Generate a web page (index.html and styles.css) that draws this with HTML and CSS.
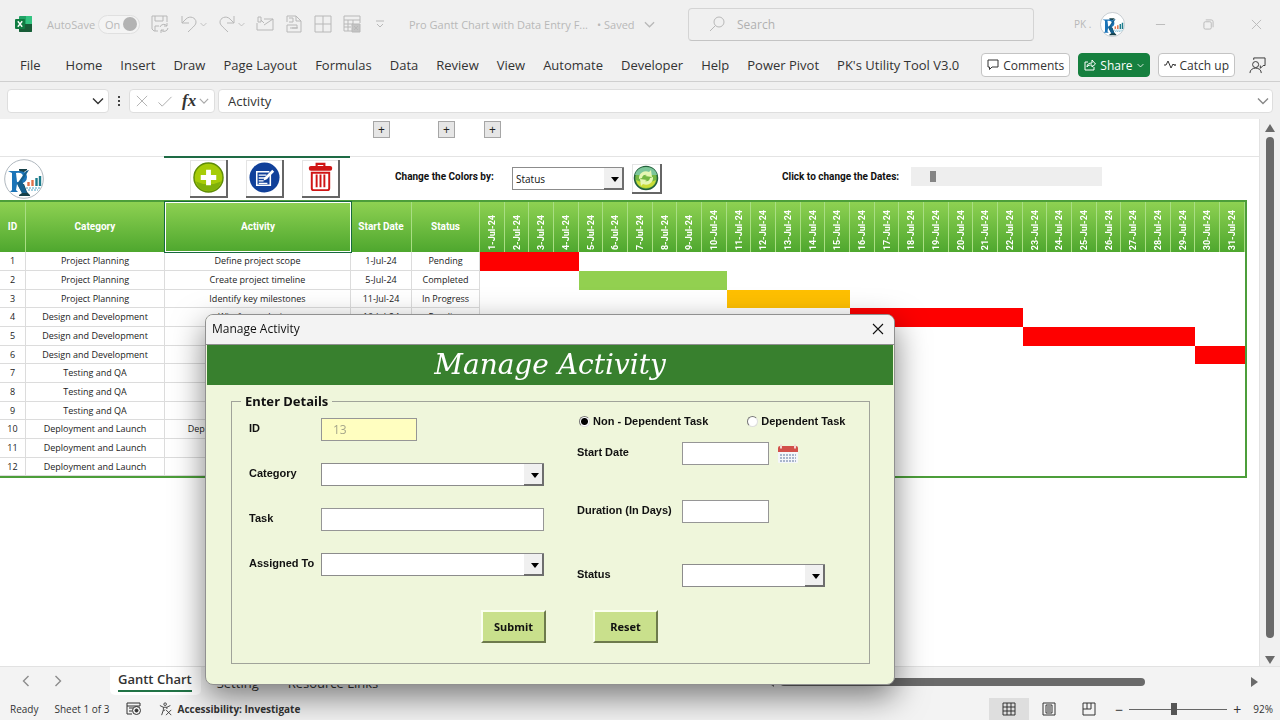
FILE: index.html
```html
<!DOCTYPE html>
<html lang="en">
<head>
  <meta charset="UTF-8">
  <meta name="viewport" content="width=device-width, initial-scale=1.0">
  <title>Pro Gantt Chart with Data Entry Form</title>
  <link rel="stylesheet" href="styles.css">
</head>
<body>
  <svg class="defs" width="0" height="0" aria-hidden="true">
    <symbol id="chevron" viewBox="0 0 12 12"><path d="M1 3.500 6 8.500l5-5" fill="none" stroke="currentColor" stroke-width="1.4"/></symbol>
    <symbol id="cross" viewBox="0 0 12 12"><path d="M1 1l10 10M11 1 1 11" fill="none" stroke="currentColor" stroke-width="1.1"/></symbol>
    <symbol id="logo" viewBox="0 0 40 40">
      <circle cx="20" cy="20" r="19.3" fill="#fff" stroke="#9aa5ad" stroke-width="0.8"/>
      <path d="M14 26 20 25l3 8 3 3v1H15v-1l3-2z" fill="#17414a"/>
      <path d="M15 11v-1h8v1l-3 2-3 3z" fill="#17414a"/>
      <path d="M4 12h11q8 0 8 6t-8 7h-2l-1 6 2 2H6l2-2V14z" fill="#1b74b8"/>
      <path d="M12 14q7-1 7 4t-6 5z" fill="#fff"/>
      <path d="M13 25 22 12l3-1-7 11 5 12h-5z" fill="#155f8e"/>
      <path d="M24.500 23v4" stroke="#e0714a" stroke-width="2.400"/>
      <path d="M28.500 21v6" stroke="#e0714a" stroke-width="2.400"/>
      <path d="M32.500 19v8M36 17v10" stroke="#1d7c8c" stroke-width="2.400"/>
      <path d="M22 29h14M24 31h10" stroke="#4aa3c4" stroke-width="1" stroke-dasharray="2 1"/>
    </symbol>
  </svg>

  <div class="app">
    <header class="titlebar">
      <svg class="excel-logo" viewBox="0 0 18 18">
        <rect x="4" y="1" width="13" height="16" rx="1" fill="#21a366"/>
        <path d="M4 9h13v7a1 1 0 0 1-1 1H5a1 1 0 0 1-1-1z" fill="#185c37"/>
        <path d="M11 1h5a1 1 0 0 1 1 1v7h-6z" fill="#33c481"/>
        <rect x="0" y="4" width="10" height="10" rx="1" fill="#107c41"/>
        <path d="M2.800 6.300l4.400 5.400M7.200 6.300l-4.400 5.400" stroke="#fff" stroke-width="1.400"/>
      </svg>
      <span class="autosave">AutoSave</span>
      <button class="toggle" type="button">On <i></i></button>
      <div class="quick">
        <svg viewBox="0 0 18 18"><path d="M7 16H3L1 14V1h15v6M4 1v5h8V1M4 16v-5h4"/><path d="M9 12a4 4 0 0 1 7-1M16 8v3h-3M17 13a4 4 0 0 1-7 2M10 18v-3h3"/></svg>
        <span class="pair">
          <svg viewBox="0 0 18 18"><path d="M2 1v7h7M2 8l4-4c4-4 10-1 10 3 0 3-2 4-8 10"/></svg>
          <svg class="mini"><use href="#chevron"/></svg>
        </span>
        <span class="pair">
          <svg viewBox="0 0 18 18"><path d="M16 1v7H9M16 8l-4-4C8 0 2 3 2 7c0 3 2 4 8 10"/></svg>
          <svg class="mini"><use href="#chevron"/></svg>
        </span>
        <svg viewBox="0 0 18 18"><path d="M8 4h9v11H1V8M8 10l9-6M2 2h3v5H2zM5 5l3 3"/></svg>
        <svg viewBox="0 0 18 18"><path d="M2 7V1h9l5 5v11H2v-7h10v3H5M11 1v5h5M4 3h4v4H4M7 13h6"/></svg>
        <svg viewBox="0 0 18 18"><path d="M1 1h16v16H1zM9 1v16M1 9h16"/></svg>
        <svg viewBox="0 0 18 18"><path d="M9 16H1V1h16v7M1 5h16M1 9h9M1 12h7M5 5v11M10 5v4"/><path d="M9 9h8v8H9z" fill="#c4c4c4"/><path d="M11 11l4 4M15 11l-4 4"/></svg>
        <svg class="more" viewBox="0 0 12 12"><path d="M2 3h8M3 6l3 3 3-3"/></svg>
      </div>
      <div class="doc">
        <span>Pro Gantt Chart with Data Entry F...</span>
        <span>• Saved</span>
        <svg class="mini"><use href="#chevron"/></svg>
      </div>
      <label class="search">
        <svg viewBox="0 0 16 16"><circle cx="10" cy="6" r="5"/><path d="M6.500 9.500 1 15"/></svg>
        <input type="text" placeholder="Search" aria-label="Search">
      </label>
      <span class="user">PK .</span>
      <svg class="avatar"><use href="#logo"/></svg>
      <div class="window-buttons">
        <button type="button" aria-label="Minimize"><svg viewBox="0 0 12 12"><path d="M1 6h10"/></svg></button>
        <button type="button" aria-label="Restore"><svg viewBox="0 0 12 12"><path d="M3 1h6a2 2 0 0 1 2 2v6"/><rect x="1" y="3" width="8" height="8" rx="1.500"/></svg></button>
        <button type="button" aria-label="Close window"><svg viewBox="0 0 12 12"><path d="M1 1l10 10M11 1 1 11"/></svg></button>
      </div>
    </header>

    <nav class="ribbon">
      <a href="#" class="file">File</a>
      <a href="#">Home</a>
      <a href="#">Insert</a>
      <a href="#">Draw</a>
      <a href="#">Page Layout</a>
      <a href="#">Formulas</a>
      <a href="#">Data</a>
      <a href="#">Review</a>
      <a href="#">View</a>
      <a href="#">Automate</a>
      <a href="#">Developer</a>
      <a href="#">Help</a>
      <a href="#">Power Pivot</a>
      <a href="#">PK's Utility Tool V3.0</a>
      <div class="ribbon-actions">
        <button type="button"><svg viewBox="0 0 12 12"><path d="M1 1h10v7H5l-2.500 2.500V8H1z"/></svg>Comments</button>
        <button type="button" class="share"><svg viewBox="0 0 12 12"><path d="M4 3H1v8h9V8M3 8c0-3 2-4 5-4V1l3.500 4L8 8V6C6 6 4 6 3 8z"/></svg>Share<svg class="tiny"><use href="#chevron"/></svg></button>
        <button type="button"><svg viewBox="0 0 12 12"><path d="M0 6h2l2-4 3 7 2-4 1 1"/><circle cx="11" cy="6" r="0.600"/></svg>Catch up</button>
        <svg class="person" viewBox="0 0 18 18"><circle cx="7" cy="8" r="3.200"/><path d="M1 17c0-7 12-7 12 0M5 3V1h12v8h-2l-3 3V9"/></svg>
      </div>
    </nav>

    <div class="formula-bar">
      <div class="name-box"><input type="text" aria-label="Name box"><svg><use href="#chevron"/></svg></div>
      <span class="dots"><i></i><i></i><i></i></span>
      <div class="fx">
        <svg viewBox="0 0 14 14"><path d="M1 1l12 12M13 1 1 13"/></svg>
        <svg class="tick" viewBox="0 0 16 14"><path d="M1 8l4 4L15 2"/></svg>
        <em>fx</em>
        <svg class="small"><use href="#chevron"/></svg>
      </div>
      <div class="formula"><input type="text" value="Activity" aria-label="Formula"><svg class="small"><use href="#chevron"/></svg></div>
    </div>

    <main class="workspace">
      <div class="sheet">
        <div class="outline">
          <button type="button">+</button>
          <button type="button">+</button>
          <button type="button">+</button>
        </div>
        <div class="tools">
          <svg class="brand"><use href="#logo"/></svg>
          <div class="tool-buttons">
            <button type="button" aria-label="Add activity">
              <svg viewBox="0 0 32 32"><circle cx="16" cy="16" r="15" fill="#a6cc08" stroke="#5f8c08" stroke-width="1.500"/><path d="M3 20q13 6 26 0-3 10-13 10T3 20z" fill="#7fb00a"/><path d="M16 8v16M8 16h16" stroke="#fff" stroke-width="5"/></svg>
            </button>
            <button type="button" aria-label="Edit activity">
              <svg viewBox="0 0 32 32"><circle cx="16" cy="16" r="15.500" fill="#10409a"/><path d="M21 10H8v14h14V13" fill="none" stroke="#fff" stroke-width="1.600"/><path d="M10 13.500h8M10 16.500h9M10 19.500h5M10 22h9" stroke="#fff" stroke-width="1.400"/><path d="M15 19l1-3 8-8 2 2-8 8z" fill="#fff"/></svg>
            </button>
            <button type="button" aria-label="Delete activity">
              <svg viewBox="0 0 32 32"><path d="M12 5V2h8v3" fill="none" stroke="#d01515" stroke-width="2.200"/><rect x="4" y="4" width="24" height="5" rx="2" fill="#d01515"/><path d="M7 11h18v16q0 2-2 2H9q-2 0-2-2z" fill="#fff" stroke="#d01515" stroke-width="2"/><path d="M12 13v13M16 13v13M20 13v13" stroke="#d01515" stroke-width="2"/></svg>
            </button>
          </div>
          <div class="color-by">
            <label for="color-by">Change the Colors by:</label>
            <div class="combo">
              <select id="color-by"><option>Status</option></select>
            </div>
            <button type="button" aria-label="Refresh colors">
              <svg viewBox="0 0 26 26"><circle cx="13" cy="13" r="11.500" fill="#74b843" stroke="#235f3c" stroke-width="1.500"/><path d="M2 10q2-8 11-8t11 8z" fill="#7cc69a"/><path d="M3 15q10 5 20 0-2 8-10 8T3 15z" fill="#c9dc37"/><path d="M6 14a7 7 0 0 1 10-7l2-2 1 7-7-1 2-1q-4-1-5 3zM20 12a7 7 0 0 1-10 7l-2 2-1-7 7 1-2 1q4 1 5-3z" fill="#e6f7b4"/></svg>
            </button>
          </div>
          <div class="date-shift">
            <label for="date-shift">Click to change the Dates:</label>
            <input type="range" id="date-shift" min="0" max="100" value="10">
          </div>
        </div>

        <table class="gantt">
          <colgroup>
            <col class="c-id"><col class="c-category"><col class="c-activity"><col class="c-date"><col class="c-status">
            <col span="31">
          </colgroup>
          <thead>
            <tr id="gantt-head">
              <th>ID</th>
              <th>Category</th>
              <th class="selected">Activity</th>
              <th>Start Date</th>
              <th>Status</th>
            </tr>
          </thead>
          <tbody id="gantt-body"></tbody>
        </table>
      </div>

      <div class="v-scroll"><i class="up"></i><b></b><i class="down"></i></div>
    </main>

    <div class="tabs">
      <div class="tab-arrows">
        <svg class="prev"><use href="#chevron"/></svg>
        <svg class="next"><use href="#chevron"/></svg>
      </div>
      <a href="#" class="active"><span>Gantt Chart</span></a>
      <a href="#">Setting</a>
      <a href="#">Resource Links</a>
      <div class="h-scroll"><i class="left"></i><b></b><i class="right"></i></div>
    </div>

    <footer class="status">
      <span>Ready</span>
      <span>Sheet 1 of 3</span>
      <svg viewBox="0 0 16 14"><path d="M6 12H1V1h13v3M1 4h13M3 6h4M3 9h3"/><circle cx="10.500" cy="8.500" r="4"/><circle cx="10.500" cy="8.500" r="1.500" fill="#333"/></svg>
      <span class="access"><svg viewBox="0 0 16 16"><circle cx="7" cy="2.500" r="1.500"/><path d="M1 4l4 2v3l-2 6M13 4 9 6v2M5 6h4M5 10l2-1M8 9l6 6M14 9l-6 6"/></svg>Accessibility: Investigate</span>
      <div class="views">
        <button type="button" class="on" aria-label="Normal"><svg viewBox="0 0 14 14"><path d="M1 1h12v12H1zM5 1v12M9 1v12M1 5h12M1 9h12"/></svg></button>
        <button type="button" aria-label="Page layout"><svg viewBox="0 0 14 14"><path d="M1 1h12v12H1zM4 3h6v8H4zM5 5h4M5 7h4M5 9h4"/></svg></button>
        <button type="button" aria-label="Page break preview"><svg viewBox="0 0 14 14"><path d="M1 1h12v12H1zM5 1v6M9 1v6H1"/></svg></button>
      </div>
      <div class="zoom">
        <span>−</span>
        <input type="range" min="0" max="100" value="45" aria-label="Zoom">
        <span>+</span>
      </div>
      <span class="percent">92%</span>
    </footer>
  </div>

  <div class="dialog" role="dialog" aria-labelledby="dialog-title">
    <div class="dialog-title">
      <span id="dialog-title">Manage Activity</span>
      <button type="button" aria-label="Close"><svg><use href="#cross"/></svg></button>
    </div>
    <h1>Manage Activity</h1>
    <form id="activity-form">
      <fieldset>
        <legend>Enter Details</legend>
        <div class="fields">
          <div class="left-fields">
            <label for="task-id">ID</label>
            <input type="text" id="task-id" class="id-input" value="13" disabled>
            <label for="category">Category</label>
            <div class="combo"><select id="category"><option></option></select></div>
            <label for="task">Task</label>
            <input type="text" id="task">
            <label for="assigned">Assigned To</label>
            <div class="combo"><select id="assigned"><option></option></select></div>
          </div>
          <div class="right-fields">
            <div class="radios">
              <label><input type="radio" name="dependency" checked>Non - Dependent Task</label>
              <label><input type="radio" name="dependency">Dependent Task</label>
            </div>
            <div class="field">
              <label for="start-date">Start Date</label>
              <input type="text" id="start-date">
              <button type="button" class="calendar" aria-label="Pick a date">
                <svg viewBox="0 0 22 20"><rect x="1" y="3" width="20" height="16" rx="1" fill="#f4f6fa"/><path d="M1 8V4q0-2 2-2h16q2 0 2 2v4z" fill="#d2504a"/><path d="M4 0.500v4M18 0.500v4" stroke="#f3d8d4" stroke-width="2"/><path d="M3 11h16M3 14h16M3 17h16" stroke="#a9b5cc" stroke-width="2" stroke-dasharray="2 1"/></svg>
              </button>
            </div>
            <div class="field duration">
              <label for="duration">Duration (In Days)</label>
              <input type="text" id="duration">
            </div>
            <div class="field state">
              <label for="state">Status</label>
              <div class="combo"><select id="state"><option></option></select></div>
            </div>
          </div>
        </div>
        <div class="actions">
          <button type="submit">Submit</button>
          <button type="reset">Reset</button>
        </div>
      </fieldset>
    </form>
  </div>

  <script>
    const days = 31;

    // from/to are days of July, color is the bar's class
    const tasks = [
      { category: 'Project Planning', activity: 'Define project scope', status: 'Pending', color: 'red', from: 1, to: 4 },
      { category: 'Project Planning', activity: 'Create project timeline', status: 'Completed', color: 'green', from: 5, to: 10 },
      { category: 'Project Planning', activity: 'Identify key milestones', status: 'In Progress', color: 'amber', from: 11, to: 15 },
      { category: 'Design and Development', activity: 'Wireframe designs', status: 'Pending', color: 'red', from: 16, to: 22 },
      { category: 'Design and Development', color: 'red', from: 23, to: 29 },
      { category: 'Design and Development', color: 'red', from: 30, to: 31 },
      { category: 'Testing and QA' },
      { category: 'Testing and QA' },
      { category: 'Testing and QA' },
      { category: 'Deployment and Launch', activity: 'Deployment to production server' },
      { category: 'Deployment and Launch' },
      { category: 'Deployment and Launch' }
    ];

    const head = document.getElementById('gantt-head');
    const body = document.getElementById('gantt-body');

    for (let day = 1; day <= days; day++) {
      const th = document.createElement('th');
      th.className = 'day';
      th.innerHTML = `<span>${day}-Jul-24</span>`;
      head.appendChild(th);
    }

    tasks.forEach((task, index) => {
      const tr = document.createElement('tr');
      const start = task.status ? `${task.from}-Jul-24` : '';
      tr.innerHTML = `
        <td>${index + 1}</td>
        <td>${task.category}</td>
        <td>${task.activity || ''}</td>
        <td>${start}</td>
        <td>${task.status || ''}</td>
      `;
      for (let day = 1; day <= days; day++) {
        const td = document.createElement('td');
        td.className = 'cell';
        if (day >= task.from && day <= task.to) {
          td.classList.add(task.color);
        }
        tr.appendChild(td);
      }
      body.appendChild(tr);
    });

    document.getElementById('activity-form').addEventListener('submit', (e) => {
      e.preventDefault();
    });
  </script>
</body>
</html>
```

FILE: styles.css
```css
* {
  box-sizing: border-box;
}

body {
  font-family: "Open Sans", "Noto Sans", sans-serif;
  font-size: 12px;
  color: #333;
  margin: 0;
  overflow: hidden;
}

button, input, select {
  font: inherit;
  color: inherit;
  margin: 0;
  padding: 0;
}

a {
  color: inherit;
  text-decoration: none;
}

svg {
  fill: none;
  stroke: currentColor;
  flex: none;
}

svg use {
  stroke: none;
}

.defs {
  position: absolute;
}

.app {
  display: flex;
  flex-direction: column;
  height: 100vh;
  background: #f0f0f0;
}

/* title bar */

.titlebar {
  display: flex;
  align-items: center;
  height: 48px;
  padding-left: 15px;
  color: #b8b8b8;
}

.titlebar svg {
  width: 18px;
  height: 18px;
}

.excel-logo {
  stroke: none;
}

.autosave {
  font-size: 11px;
  margin-left: 14px;
  width: 50px;
}

.toggle {
  display: flex;
  align-items: center;
  justify-content: space-between;
  width: 42px;
  height: 19px;
  margin-left: 1px;
  padding: 0 2px 0 6px;
  font-size: 11px;
  background: #f4f4f4;
  border: 1px solid #e0e0e0;
  border-radius: 10px;
}

.toggle i {
  width: 14px;
  height: 14px;
  border-radius: 50%;
  background: #b3b3b3;
}

.quick {
  display: flex;
  align-items: center;
  gap: 11px;
  margin-left: 11px;
}

.pair {
  display: flex;
  align-items: center;
  gap: 2px;
}

.titlebar .mini {
  width: 7px;
  height: 7px;
}

.titlebar .more {
  width: 12px;
  height: 12px;
  margin-left: 2px;
}

.doc {
  display: flex;
  align-items: center;
  gap: 9px;
  width: 279px;
  margin-left: 23px;
  font-size: 11px;
  white-space: nowrap;
}

.titlebar .doc .mini {
  width: 11px;
  height: 11px;
}

.search {
  display: flex;
  align-items: center;
  gap: 12px;
  flex: 1;
  height: 33px;
  padding-left: 20px;
  border: 1px solid #d4d4d4;
  border-bottom-color: #c4c4c4;
  border-radius: 4px;
}

.titlebar .search svg {
  width: 16px;
  height: 16px;
}

.search input {
  flex: 1;
  min-width: 0;
  border: 0;
  background: none;
  outline: 0;
}

.search input::placeholder {
  color: #b0b0b0;
}

.user {
  font-size: 10px;
  margin-left: 40px;
  width: 26px;
}

.titlebar .avatar {
  width: 25px;
  height: 25px;
}

.window-buttons {
  display: flex;
  margin-left: 11px;
}

.window-buttons button {
  display: grid;
  place-items: center;
  width: 48px;
  height: 40px;
  border: 0;
  background: none;
}

.window-buttons svg {
  width: 11px;
  height: 11px;
}

/* ribbon */

.ribbon {
  display: flex;
  align-items: center;
  gap: 18px;
  height: 34px;
  padding: 1px 14px 0 20px;
  border-bottom: 1px solid #cfcfcf;
  font-size: 13px;
  white-space: nowrap;
}

.ribbon .file {
  margin-right: 7px;
}

.ribbon-actions {
  display: flex;
  align-items: center;
  gap: 8px;
  margin-left: auto;
  font-size: 12px;
}

.ribbon-actions button {
  display: flex;
  align-items: center;
  gap: 4px;
  height: 24px;
  padding: 0 5px;
  background: #fff;
  border: 1px solid #c4c4c4;
  border-radius: 4px;
}

.ribbon-actions svg {
  width: 12px;
  height: 12px;
}

.ribbon-actions .share {
  background: #16803f;
  border-color: #16803f;
  color: #fff;
}

.ribbon-actions .tiny {
  width: 7px;
  height: 7px;
}

.ribbon-actions .person {
  width: 17px;
  height: 17px;
  margin-left: 6px;
}

/* formula bar */

.formula-bar {
  display: flex;
  align-items: center;
  gap: 3px;
  height: 37px;
  padding: 1px 7px 0;
}

.name-box, .fx, .formula {
  display: flex;
  align-items: center;
  height: 24px;
  background: #fff;
  border: 1px solid #dedede;
  border-radius: 4px;
}

.name-box {
  width: 102px;
  padding-right: 4px;
}

.name-box input, .formula input {
  flex: 1;
  min-width: 0;
  border: 0;
  background: none;
  outline: 0;
}

.formula input {
  font-size: 13px;
}

.formula-bar svg {
  width: 12px;
  height: 12px;
}

.dots {
  display: flex;
  flex-direction: column;
  align-items: center;
  gap: 2px;
  width: 14px;
}

.dots i {
  width: 2px;
  height: 2px;
  background: #444;
}

.fx {
  width: 86px;
  gap: 9px;
  padding-left: 6px;
  color: #a8a8a8;
}

.formula-bar .tick {
  width: 16px;
  height: 13px;
}

.fx em {
  font: italic bold 17px "Liberation Serif", serif;
  color: #333;
}

.formula-bar .fx .small {
  width: 10px;
  margin-left: -6px;
}

.formula {
  flex: 1;
  padding: 0 3px 0 9px;
}

.formula .small {
  color: #888;
}

/* sheet */

.workspace {
  display: flex;
  flex: 1;
  min-height: 0;
}

.sheet {
  flex: 1;
  min-width: 0;
  overflow: hidden;
  background: #fff;
  border-right: 1px solid #e2e2e2;
  font-size: 9px;
  color: #222;
}

.outline {
  display: grid;
  grid-template-columns: 65px 46px 17px;
  align-items: start;
  height: 38px;
  padding: 2px 0 0 373px;
  border-bottom: 1px solid #e4e4e4;
}

.outline button {
  width: 17px;
  height: 17px;
  border: 1px solid #a6a6a6;
  background: #e6e6e6;
  font-size: 12px;
  line-height: 12px;
}

.tools {
  display: grid;
  grid-template-columns: 164px 186px 45px 387px 1fr;
  align-items: center;
  height: 43px;
  font-size: 10px;
  color: #111;
}

.tools label {
  font: 700 10px/14px Roboto, sans-serif;
}

.brand {
  width: 40px;
  height: 40px;
  margin-left: 4px;
}

/* green edge over the selected column */
.tool-buttons {
  display: flex;
  align-items: center;
  gap: 18px;
  height: 44px;
  margin-top: -2px;
  padding-left: 26px;
  border-top: 2px solid #1e6b45;
}

.tools button {
  display: grid;
  place-items: center;
  width: 38px;
  height: 38px;
  background: #fff;
  border: solid #666;
  border-width: 0 2px 2px 0;
  box-shadow: inset 1px 1px #e4e4e4;
}

.tools button svg {
  width: 31px;
  height: 31px;
  stroke: none;
}

.color-by, .date-shift {
  display: flex;
  align-items: center;
  white-space: nowrap;
}

.color-by {
  grid-column: 4;
}

.date-shift {
  padding-bottom: 4px;
}

.color-by label {
  width: 117px;
  padding-bottom: 4px;
}

.color-by .combo {
  width: 112px;
}

.color-by button {
  width: 30px;
  height: 30px;
  margin-left: 8px;
}

.color-by button svg {
  width: 26px;
  height: 26px;
}

.date-shift label {
  width: 129px;
}

.date-shift input {
  appearance: none;
  width: 191px;
  height: 19px;
  padding: 0 1px;
  background: #eee;
}

.date-shift input::-webkit-slider-thumb {
  appearance: none;
  width: 6px;
  height: 11px;
  background: #858585;
}

/* drop-down with the raised arrow button */

.combo {
  position: relative;
  display: flex;
  height: 23px;
}

.combo select {
  appearance: none;
  width: 100%;
  padding: 0 20px 0 3px;
  background: #fff;
  border: 1px solid #8c8c8c;
  border-radius: 0;
}

.combo::before {
  content: "";
  position: absolute;
  top: 1px;
  right: 0;
  bottom: 0;
  width: 18px;
  background: #f0f0f0;
  border: solid #6e6e6e;
  border-width: 0 2px 2px 0;
  pointer-events: none;
  z-index: 1;
}

.combo::after {
  content: "";
  position: absolute;
  top: 10px;
  right: 5px;
  border: 4px solid transparent;
  border-top: 5px solid #000;
  border-bottom: 0;
  pointer-events: none;
  z-index: 2;
}

/* gantt table */

.gantt {
  width: calc(100% - 12px);
  table-layout: fixed;
  border-collapse: separate;
  border-spacing: 0;
  border: 2px solid #4c9e3a;
  border-left: 0;
  text-align: center;
  white-space: nowrap;
}

.c-id { width: 26px; }
.c-category { width: 139px; }
.c-activity { width: 186px; }
.c-date { width: 61px; }
.c-status { width: 68px; }

.gantt thead {
  background: linear-gradient(#8ed152, #4ea72e);
}

.gantt th {
  height: 50px;
  padding: 0 0 2px;
  font-family: Roboto, sans-serif;
  font-size: 10px;
  color: #fff;
  border-right: 1px solid #a9de83;
}

.gantt .selected {
  border: 1px solid #fff;
  outline: 1px solid #17693d;
}

.gantt .day {
  vertical-align: bottom;
}

.day span {
  display: block;
  margin: 0 auto;
  writing-mode: vertical-rl;
  transform: rotate(180deg);
  font-size: 9px;
}

.gantt td {
  height: 19px;
  padding: 0;
  line-height: 12px;
  border-right: 1px solid #dcdcdc;
  border-bottom: 1px solid #dcdcdc;
}

.gantt tr:nth-child(3n) td {
  height: 18px;
}

.gantt .cell {
  border: 0;
}

.gantt .red { background: #fe0000; }
.gantt .green { background: #92d050; }
.gantt .amber { background: #ffc000; }

/* scroll bars */

.v-scroll {
  display: flex;
  flex-direction: column;
  align-items: center;
  width: 20px;
  padding: 5px 0 2px;
}

.v-scroll b {
  flex: 1;
  width: 8px;
  margin: 5px 0 18px;
  border-radius: 4px;
  background: #6a6a6a;
}

.v-scroll i, .h-scroll i {
  border: 5px solid transparent;
}

.v-scroll .up {
  border-top: 0;
  border-bottom: 8px solid #6a6a6a;
}

.v-scroll .down {
  border-bottom: 0;
  border-top: 8px solid #6a6a6a;
}

.h-scroll {
  display: flex;
  align-items: center;
  flex: 1;
  margin: 0 22px 2px 376px;
}

.h-scroll b {
  flex: 1;
  height: 8px;
  margin: 0 106px 0 6px;
  border-radius: 4px;
  background: #6a6a6a;
}

.h-scroll .left {
  border-left: 0;
  border-right: 7px solid #6a6a6a;
}

.h-scroll .right {
  border-right: 0;
  border-left: 7px solid #6a6a6a;
}

/* sheet tabs */

.tabs {
  display: flex;
  height: 32px;
  font-size: 13px;
  white-space: nowrap;
  background: #f3f3f3;
  border-top: 1px solid #e2e2e2;
}

.tab-arrows {
  display: flex;
  align-items: center;
  gap: 20px;
  width: 110px;
  padding: 0 0 3px 20px;
  color: #8c8c8c;
}

.tab-arrows svg {
  width: 12px;
  height: 12px;
}

.prev {
  transform: rotate(90deg);
}

.next {
  transform: rotate(-90deg);
}

.tabs a {
  padding: 7px 13px 0 16px;
}

.tabs .active {
  padding: 3px 9px 0 8px;
  font-weight: 600;
  background: #fff;
  border-radius: 0 0 5px 5px;
  height: 28px;
}

.active span {
  display: block;
  height: 22px;
  border-bottom: 2px solid #217346;
}

/* status bar */

.status {
  display: flex;
  align-items: center;
  gap: 16px;
  height: 22px;
  padding: 0 7px 0 10px;
  font-size: 10px;
  background: #f3f3f3;
}

.status svg {
  width: 16px;
  height: 14px;
}

.access {
  display: flex;
  align-items: center;
  gap: 4px;
  font-weight: 700;
}

.views {
  display: flex;
  margin-left: auto;
}

.views button {
  display: grid;
  place-items: center;
  width: 40px;
  height: 22px;
  border: 0;
  background: none;
}

.views .on {
  background: #dedede;
}

.zoom {
  display: flex;
  align-items: center;
  gap: 6px;
  margin-left: -10px;
  font-size: 14px;
}

.zoom input {
  appearance: none;
  width: 98px;
  height: 12px;
  background: linear-gradient(#666, #666) center / 100% 1px no-repeat;
}

.zoom input::-webkit-slider-thumb {
  appearance: none;
  width: 6px;
  height: 12px;
  background: #555;
}

.percent {
  margin-left: -4px;
}

/* manage activity dialog */

.dialog {
  position: absolute;
  z-index: 10;
  top: 314px;
  left: 205px;
  width: 690px;
  padding: 0 1px 20px;
  background: #eff6db;
  border: 1px solid #909090;
  border-radius: 8px;
  filter: drop-shadow(0 12px 16px rgba(0, 0, 0, 0.5));
  color: #111;
}

.dialog-title {
  display: flex;
  align-items: center;
  justify-content: space-between;
  height: 30px;
  margin: 0 -1px;
  padding: 0 10px 2px 6px;
  background: #f3f3f3;
  border-bottom: 1px solid #8f8f8f;
  border-radius: 7px 7px 0 0;
}

.dialog-title button {
  display: flex;
  border: 0;
  background: none;
}

.dialog-title svg {
  width: 12px;
  height: 12px;
}

.dialog h1 {
  margin: 0;
  font: italic 400 28px/40px "Lucida Calligraphy", "DejaVu Serif", serif;
  text-align: center;
  color: #fff;
  background: #38802e;
}

.dialog form {
  padding: 6px 23px 0 24px;
}

.dialog fieldset {
  margin: 0;
  padding: 3px 17px 20px;
  border: 1px solid #a0a39a;
}

.dialog legend {
  margin-left: -8px;
  padding: 0 4px;
  font: 700 13px/20px "Noto Sans", sans-serif;
}

.fields {
  display: flex;
  gap: 33px;
  font: 700 11px/13px "Liberation Sans", sans-serif;
}

.left-fields {
  display: grid;
  grid-template-columns: 72px 223px;
  align-content: start;
  row-gap: 22px;
  padding-top: 4px;
}

.left-fields label, .field label {
  padding-top: 4px;
}

.fields input[type="text"] {
  height: 23px;
  background: #fff;
  border: 1px solid #969696;
}

.fields .id-input[type="text"] {
  width: 96px;
  padding-left: 11px;
  background: #fffec0;
  font: 12px "Open Sans", sans-serif;
  color: #a5a58a;
}

.radios {
  display: flex;
  align-items: center;
  gap: 37px;
  height: 15px;
  margin-bottom: 13px;
}

.radios label {
  display: flex;
  align-items: center;
  gap: 3px;
}

.radios input {
  appearance: none;
  width: 11px;
  height: 11px;
  margin-left: 2px;
  border: 1px solid;
  border-color: #777 #ddd #ddd #777;
  border-radius: 50%;
  background: #fff;
}

.radios input:checked {
  background: radial-gradient(#000 3px, #fff 4px);
}

.field {
  display: grid;
  grid-template-columns: 105px 87px auto;
  justify-content: start;
}

.calendar {
  display: flex;
  margin-left: 8px;
  border: 0;
  background: none;
}

.calendar svg {
  width: 22px;
  height: 24px;
  stroke: none;
}

.duration {
  margin-top: 34px;
}

.state {
  grid-template-columns: 105px 143px;
  margin-top: 41px;
}

.actions {
  display: flex;
  justify-content: center;
  gap: 47px;
  margin-top: 23px;
  padding-left: 38px;
}

.actions button {
  width: 65px;
  height: 33px;
  font: 700 11px "Noto Sans", sans-serif;
  background: #c9e08c;
  border: 2px solid;
  border-color: #fbfff0 #6d7a4c #6d7a4c #fbfff0;
}
```
